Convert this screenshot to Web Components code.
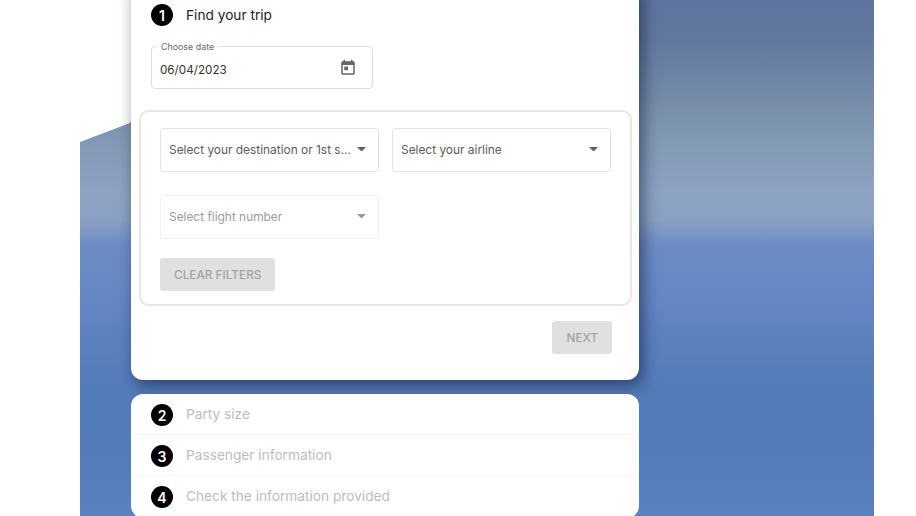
<!DOCTYPE html>
<html lang="en">
<head>
<meta charset="utf-8">
<title>Find your trip</title>
<style>
  html, body { margin: 0; padding: 0; background: #fff; }
  body { font-family: Inter, "Liberation Sans", sans-serif; }
</style>
</head>
<body>
<trip-page>
  <step-card class="open" slot="cards">
    <step-row num="1">Find your trip</step-row>
    <date-field label="Choose date" value="06/04/2023"></date-field>
    <filter-panel>
      <select-field>Select your destination or 1st s...</select-field>
      <select-field>Select your airline</select-field>
      <select-field disabled>Select flight number</select-field>
      <action-button slot="actions">CLEAR FILTERS</action-button>
    </filter-panel>
    <action-button slot="footer">NEXT</action-button>
  </step-card>
  <step-list slot="cards">
    <step-row num="2" disabled>Party size</step-row>
    <step-row num="3" disabled>Passenger information</step-row>
    <step-row num="4" disabled>Check the information provided</step-row>
  </step-list>
</trip-page>

<script>
class TripPage extends HTMLElement {
  constructor() {
    super();
    this.attachShadow({ mode: 'open' });
    this.shadowRoot.innerHTML = `
      <style>
        :host {
          display: block;
          position: relative;
          width: 916px;
          height: 516px;
          overflow: hidden;
          background: #fff;
        }
        .sky {
          position: absolute;
          left: 80px;
          top: 0;
          width: 794px;
          height: 516px;
          clip-path: polygon(0 142px, 50px 123px, 100px 0, 100% 0, 100% 100%, 0 100%);
          background: linear-gradient(180deg,
            #5f749f 0, #62789f 40px, #7288a6 90px, #8299b5 140px, #8ea3c2 195px,
            #8aa1c4 220px, #6d8cc5 245px, #6586c4 300px, #5a80bd 350px, #527bb9 400px,
            #557dbc 470px, #5a81c0 516px);
        }
        .cards {
          position: relative;
          display: flex;
          flex-direction: column;
          gap: 14px;
          width: 508px;
          margin: -16px 0 0 131px;
        }
      </style>
      <div class="sky"></div>
      <div class="cards"><slot name="cards"></slot></div>
    `;
  }
}

class StepCard extends HTMLElement {
  constructor() {
    super();
    this.attachShadow({ mode: 'open' });
    this.shadowRoot.innerHTML = `
      <style>
        :host {
          display: block;
          background: #fff;
          border-radius: 0 0 12px 12px;
          box-shadow: 4px 6px 16px rgba(10, 20, 50, 0.55);
          padding: 20px 7px 26px 8px;
        }
        .footer {
          display: flex;
          justify-content: flex-end;
          padding: 15px 20px 0 0;
        }
      </style>
      <slot></slot>
      <div class="footer"><slot name="footer"></slot></div>
    `;
  }
}

class StepList extends HTMLElement {
  constructor() {
    super();
    this.attachShadow({ mode: 'open' });
    this.shadowRoot.innerHTML = `
      <style>
        :host {
          display: block;
          background: #fff;
          border-radius: 12px;
          height: 124px;
          overflow: hidden;
        }
        ::slotted(step-row:not(:last-child)) { border-bottom: 1px solid #f4f4f4; }
      </style>
      <slot></slot>
    `;
  }
}

class StepRow extends HTMLElement {
  constructor() {
    super();
    this.attachShadow({ mode: 'open' });
    const num = this.getAttribute('num');
    this.shadowRoot.innerHTML = `
      <style>
        :host {
          display: flex;
          align-items: center;
          gap: 13px;
          height: 40px;
          padding-left: 20px;
          box-sizing: content-box;
          font-size: 13.7px;
          color: #222;
        }
        :host([disabled]) { color: #bdbdbd; }
        :host([disabled]) .badge { margin-top: 2px; }
        :host([num="1"]) { height: 22px; padding-left: 12px; }
        .badge {
          flex: none;
          display: flex;
          align-items: center;
          justify-content: center;
          width: 22px;
          height: 22px;
          border-radius: 50%;
          background: #000;
          color: #fff;
          font-size: 14px;
          font-weight: 600;
        }
        .label { margin-top: -1px; }
      </style>
      <span class="badge">${num}</span>
      <span class="label"><slot></slot></span>
    `;
  }
}

class DateField extends HTMLElement {
  constructor() {
    super();
    this.attachShadow({ mode: 'open' });
    const label = this.getAttribute('label');
    const value = this.getAttribute('value');
    this.shadowRoot.innerHTML = `
      <style>
        :host {
          display: flex;
          align-items: center;
          justify-content: space-between;
          position: relative;
          box-sizing: border-box;
          width: 222px;
          height: 43px;
          margin: 20px 0 21px 12px;
          padding: 5px 15px 0 8px;
          border: 1px solid #dcdcdc;
          border-radius: 4px;
          font-size: 11.7px;
          color: #333;
        }
        .label {
          position: absolute;
          left: 5px;
          top: -6px;
          padding: 0 4px;
          background: #fff;
          font-size: 8.9px;
          line-height: 11px;
          color: #6a6a6a;
        }
        svg { width: 18px; height: 18px; fill: #666; display: block; margin-top: -5px; }
      </style>
      <span class="label">${label}</span>
      <span>${value}</span>
      <svg viewBox="0 0 24 24"><path d="M19 3h-1V1h-2v2H8V1H6v2H5c-1.11 0-1.99.9-1.99 2L3 19c0 1.1.89 2 2 2h14c1.1 0 2-.9 2-2V5c0-1.1-.9-2-2-2zm0 16H5V8h14v11zM7 10h5v5H7z"/></svg>
    `;
  }
}

class FilterPanel extends HTMLElement {
  constructor() {
    super();
    this.attachShadow({ mode: 'open' });
    this.shadowRoot.innerHTML = `
      <style>
        :host {
          display: block;
          box-sizing: border-box;
          width: 493px;
          height: 196px;
          padding: 16px 20px 0 19px;
          border: 2px solid #e6e6e3;
          border-radius: 10px;
        }
        .grid {
          display: grid;
          grid-template-columns: 219px 219px;
          column-gap: 13px;
          row-gap: 23px;
        }
        .actions { display: flex; margin-top: 19px; }
      </style>
      <div class="grid"><slot></slot></div>
      <div class="actions"><slot name="actions"></slot></div>
    `;
  }
}

class SelectField extends HTMLElement {
  constructor() {
    super();
    this.attachShadow({ mode: 'open' });
    this.shadowRoot.innerHTML = `
      <style>
        :host {
          display: flex;
          align-items: center;
          justify-content: space-between;
          box-sizing: border-box;
          height: 44px;
          padding: 0 12px 0 8px;
          border: 1px solid #e2e2e2;
          border-radius: 3px;
          font-size: 11.9px;
          color: #5c5c5c;
        }
        :host([disabled]) { border-color: #f0f0f0; color: #9b9b9b; }
        .text { white-space: nowrap; margin-top: -2px; }
        svg { flex: none; display: block; width: 9px; height: 4.5px; fill: #5c5c5c; margin-top: -2px; }
        :host([disabled]) svg { fill: #9b9b9b; }
      </style>
      <span class="text"><slot></slot></span>
      <svg viewBox="0 0 10 5"><path d="M0 0h10L5 5z"/></svg>
    `;
  }
}

class ActionButton extends HTMLElement {
  constructor() {
    super();
    this.attachShadow({ mode: 'open' });
    this.shadowRoot.innerHTML = `
      <style>
        :host {
          display: inline-flex;
          align-items: center;
          justify-content: center;
          height: 33px;
          padding: 0 14px;
          background: #e0e0e0;
          border-radius: 3px;
          font-size: 11.8px;
          font-weight: 500;
          color: #a4a4a4;
        }
      </style>
      <slot></slot>
    `;
  }
}

customElements.define('trip-page', TripPage);
customElements.define('step-card', StepCard);
customElements.define('step-list', StepList);
customElements.define('step-row', StepRow);
customElements.define('date-field', DateField);
customElements.define('filter-panel', FilterPanel);
customElements.define('select-field', SelectField);
customElements.define('action-button', ActionButton);
</script>
</body>
</html>
